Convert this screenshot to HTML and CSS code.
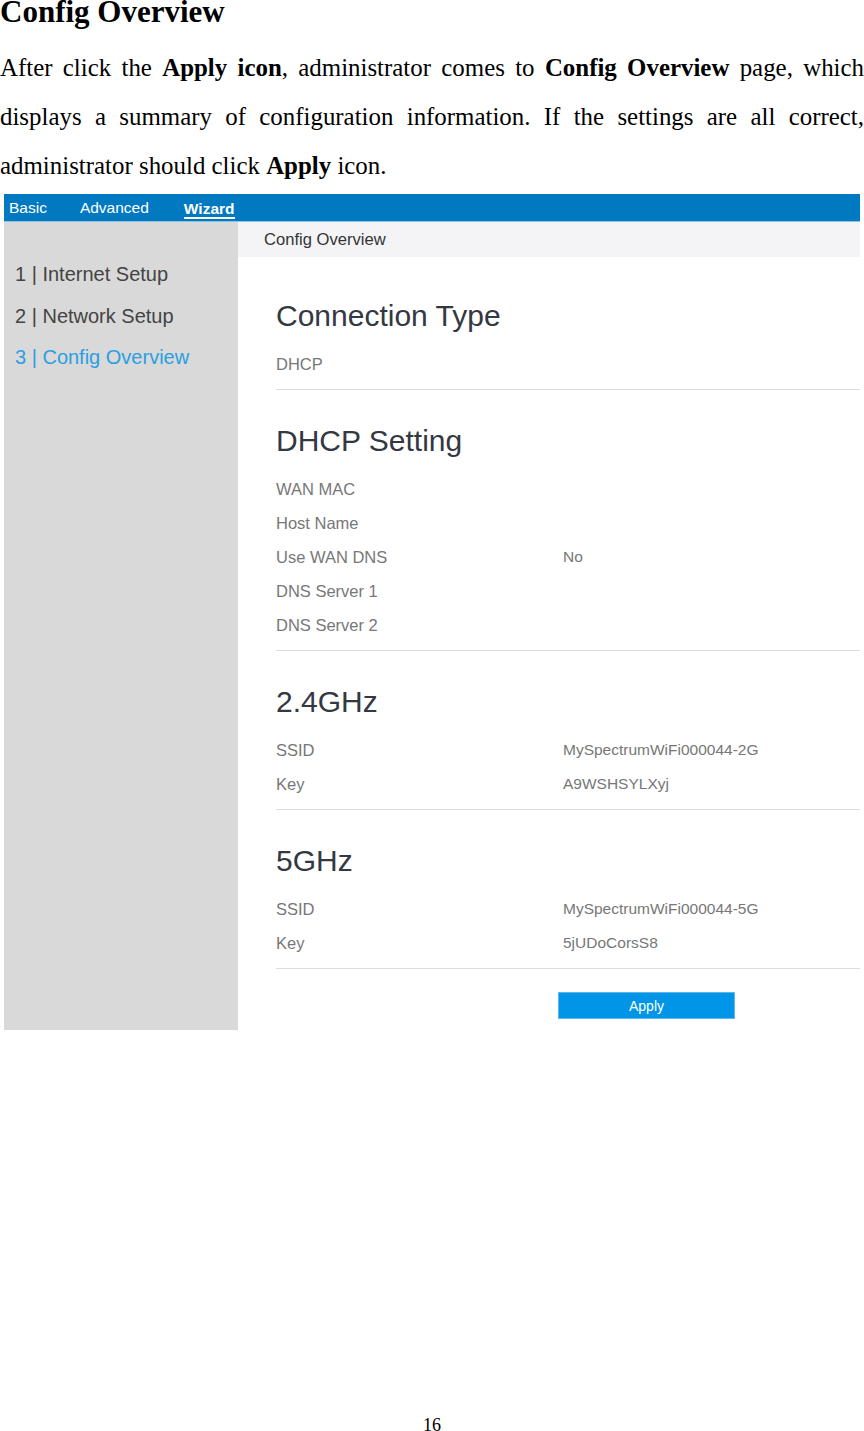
FILE: index.html
```html
<!DOCTYPE html>
<html>
<head>
<meta charset="utf-8">
<link rel="stylesheet" href="styles.css">
</head>
<body>
<div class="page">
  <h1 class="doc-title">Config Overview</h1>
  <p class="doc-text">After click the <b>Apply icon</b>, administrator comes to <b>Config Overview</b> page, which displays a summary of configuration information. If the settings are all correct, administrator should click <b>Apply</b> icon.</p>

  <div class="shot">
    <div class="topnav">
      <span class="nav-item">Basic</span>
      <span class="nav-item">Advanced</span>
      <span class="nav-item active">Wizard</span>
    </div>
    <div class="shot-body">
      <div class="sidebar">
        <div class="step">1 | Internet Setup</div>
        <div class="step">2 | Network Setup</div>
        <div class="step current">3 | Config Overview</div>
      </div>
      <div class="main">
        <div class="crumb">Config Overview</div>
        <div class="content">
          <section class="group">
            <h2>Connection Type</h2>
            <div class="row"><span class="label">DHCP</span><span class="value"></span></div>
          </section>
          <section class="group">
            <h2>DHCP Setting</h2>
            <div class="row"><span class="label">WAN MAC</span><span class="value"></span></div>
            <div class="row"><span class="label">Host Name</span><span class="value"></span></div>
            <div class="row"><span class="label">Use WAN DNS</span><span class="value">No</span></div>
            <div class="row"><span class="label">DNS Server 1</span><span class="value"></span></div>
            <div class="row"><span class="label">DNS Server 2</span><span class="value"></span></div>
          </section>
          <section class="group">
            <h2>2.4GHz</h2>
            <div class="row"><span class="label">SSID</span><span class="value">MySpectrumWiFi000044-2G</span></div>
            <div class="row"><span class="label">Key</span><span class="value">A9WSHSYLXyj</span></div>
          </section>
          <section class="group">
            <h2>5GHz</h2>
            <div class="row"><span class="label">SSID</span><span class="value">MySpectrumWiFi000044-5G</span></div>
            <div class="row"><span class="label">Key</span><span class="value">5jUDoCorsS8</span></div>
          </section>
          <div class="actions">
            <button class="apply">Apply</button>
          </div>
        </div>
      </div>
    </div>
  </div>

  <div class="page-num">16</div>
</div>
</body>
</html>
```
FILE: styles.css
```css
html, body {
  margin: 0;
  padding: 0;
  overflow: hidden;
  background: #fff;
}
.page {
  width: 864px;
  font-family: "Liberation Serif", "Times New Roman", serif;
  color: #000;
}
.doc-title {
  margin: 0;
  font-size: 31px;
  line-height: 24px;
  font-weight: bold;
}
.doc-text {
  margin: 19px 0 0 0;
  font-size: 24.9px;
  line-height: 49px;
  text-align: justify;
}
.shot {
  margin: 4px 0 0 4px;
  width: 856px;
  font-family: "Liberation Sans", Arial, sans-serif;
}
.topnav {
  height: 27px;
  background: #0079c1;
  border-bottom: 1px solid #8cc4e8;
  display: flex;
  align-items: center;
  padding-left: 5px;
}
.nav-item {
  color: #fff;
  font-size: 15.5px;
  line-height: 18px;
}
.nav-item:nth-child(2) { margin-left: 33px; }
.nav-item:nth-child(3) { margin-left: 35px; }
.nav-item.active {
  font-weight: bold;
  border-bottom: 2px solid #fff;
  line-height: 17px;
  margin-top: 3px;
}
.shot-body {
  display: flex;
}
.sidebar {
  width: 234px;
  background: #d9d9d9;
  padding-top: 32px;
  padding-left: 11px;
  box-sizing: border-box;
}
.step {
  font-size: 20px;
  line-height: 41.5px;
  color: #444;
}
.step.current {
  color: #2a9fe2;
}
.main {
  flex: 1;
}
.crumb {
  height: 35px;
  background: #f4f4f6;
  padding-left: 26px;
  font-size: 16.6px;
  line-height: 35px;
  color: #333;
}
.content {
  padding: 42px 0 11px 38px;
}
.group {
  border-bottom: 1px solid #dcdcdc;
  padding-bottom: 8px;
  margin-bottom: 34px;
}
.group h2 {
  margin: 0 0 14px 0;
  font-weight: normal;
  font-size: 30px;
  line-height: 34px;
  color: #333842;
}
.row {
  display: flex;
  line-height: 34px;
  height: 34px;
}
.label {
  width: 287px;
  font-size: 16.5px;
  color: #777;
}
.value {
  font-size: 15.5px;
  color: #777;
}
.actions {
  margin-top: -11px;
  padding-left: 282px;
}
.apply {
  width: 177px;
  height: 27px;
  background: #0095e6;
  border: 1px solid #5bb8f0;
  color: #fff;
  font-family: "Liberation Sans", Arial, sans-serif;
  font-size: 14px;
  padding: 0;
  display: block;
}
.page-num {
  margin-top: 387px;
  text-align: center;
  font-size: 18px;
  line-height: 16px;
}
```
